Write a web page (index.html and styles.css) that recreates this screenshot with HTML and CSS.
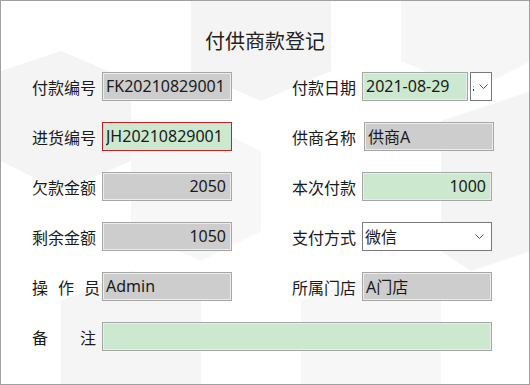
FILE: index.html
```html
<!DOCTYPE html>
<html lang="zh-CN">
<head>
  <meta charset="UTF-8" />
  <meta name="viewport" content="width=device-width, initial-scale=1.0" />
  <title>付供商款登记</title>
  <link rel="stylesheet" href="styles.css">
</head>
<body>
  <div class="panel">
    <!-- 背景装饰 -->
    <svg class="bg" width="530" height="385" viewBox="0 0 530 385">
      <polygon points="190,0 330,0 330,70 260,100 190,70" fill="#f4f4f4" />
      <polygon points="400,0 530,0 530,60 470,90 400,60" fill="#f6f6f6" />
      <polygon points="0,70 60,50 130,80 130,160 60,190 0,160" fill="#f4f4f4" />
      <polygon points="130,150 200,120 260,150 260,230 200,260 130,230" fill="#f7f7f7" />
      <polygon points="60,300 130,270 200,300 200,385 60,385" fill="#f5f5f5" />
      <polygon points="440,120 530,90 530,250 470,270 440,250" fill="#f4f4f4" />
      <polygon points="300,300 380,270 440,300 440,385 300,385" fill="#f7f7f7" />
    </svg>

    <h1 class="title">付供商款登记</h1>

    <div class="form">
      <label class="lbl">付款编号</label>
      <div class="cell"><input class="box ro" type="text" value="FK20210829001" readonly></div>
      <label class="lbl">付款日期</label>
      <div class="date">
        <input class="box green" type="text" value="2021-08-29">
        <button class="date-btn" type="button">
          <span class="dots"></span>
          <svg width="9" height="5" viewBox="0 0 9 5"><path d="M0.5 0.5 L4.5 4.5 L8.5 0.5" fill="none" stroke="#555" stroke-width="1"/></svg>
        </button>
      </div>

      <label class="lbl">进货编号</label>
      <div class="cell"><input class="box green err" type="text" value="JH20210829001"></div>
      <label class="lbl">供商名称</label>
      <div class="cell"><input class="box ro shift" type="text" value="供商A" readonly></div>

      <label class="lbl">欠款金额</label>
      <div class="cell"><input class="box ro num" type="text" value="2050" readonly></div>
      <label class="lbl">本次付款</label>
      <div class="cell"><input class="box green num" type="text" value="1000"></div>

      <label class="lbl">剩余金额</label>
      <div class="cell"><input class="box ro num" type="text" value="1050" readonly></div>
      <label class="lbl">支付方式</label>
      <div class="select">
        <span>微信</span>
        <svg width="9" height="5" viewBox="0 0 9 5"><path d="M0.5 0.5 L4.5 4.5 L8.5 0.5" fill="none" stroke="#555" stroke-width="1"/></svg>
      </div>

      <label class="lbl wide">操作员</label>
      <div class="cell"><input class="box ro" type="text" value="Admin" readonly></div>
      <label class="lbl">所属门店</label>
      <div class="cell"><input class="box ro" type="text" value="A门店" readonly></div>

      <label class="lbl">备注</label>
      <div class="cell span"><input class="box green" type="text" value=""></div>
    </div>
  </div>
</body>
</html>
```

FILE: styles.css
```css
body {
  margin: 0;
  font-family: "Noto Sans", "Noto Sans CJK SC", sans-serif;
  color: #1a1a1a;
}
.panel {
  position: relative;
  width: 530px;
  height: 385px;
  box-sizing: border-box;
  border: 1px solid #a0a0a0;
  background: #fff;
  overflow: hidden;
  padding-top: 26px;
}
.bg {
  position: absolute;
  left: 0;
  top: 0;
}
.title {
  position: relative;
  margin: 0 0 17px 0;
  font-family: "Noto Sans CJK SC", sans-serif;
  font-size: 20px;
  font-weight: normal;
  line-height: 28px;
  text-align: center;
  color: #222;
  padding-right: 0;
}
.form {
  position: relative;
  display: grid;
  grid-template-columns: 70px 190px 70px 130px;
  grid-auto-rows: 29px;
  row-gap: 21px;
  padding-left: 31px;
}
.lbl {
  display: block;
  width: 64px;
  font-family: "Noto Sans CJK SC", sans-serif;
  font-size: 16px;
  line-height: 29px;
  padding-top: 1px;
  text-align: justify;
  text-align-last: justify;
  white-space: nowrap;
}
.lbl.wide {
  width: 68px;
}
.cell {
  display: flex;
}
.span {
  grid-column: 2 / 5;
}
.box {
  width: 130px;
  height: 29px;
  box-sizing: border-box;
  margin: 0;
  padding: 0 3px 2px 3px;
  border: 1px solid #a6a6a6;
  box-shadow: inset 0 0 0 1px #ececec;
  font-family: "Noto Sans", "Noto Sans CJK SC", sans-serif;
  font-size: 16px;
  color: #1a1a1a;
  outline: none;
}
.span .box {
  width: 390px;
}
.ro {
  background: #cdcdcd;
}
.green {
  background: #cce8cf;
}
.err {
  border-color: #c8202a;
  box-shadow: none;
}
.num {
  text-align: right;
  padding-right: 5px;
}
.shift {
  margin-left: 2px;
}
.date {
  display: flex;
  gap: 2px;
}
.date .box {
  width: 106px;
}
.date-btn {
  position: relative;
  width: 22px;
  height: 29px;
  box-sizing: border-box;
  margin: 0;
  padding: 0 0 0 4px;
  border: 1px solid #7a7a7a;
  background: #fff;
  display: flex;
  align-items: center;
  justify-content: center;
}
.dots {
  position: absolute;
  left: 2px;
  top: 13px;
  width: 1px;
  height: 5px;
  border-top: 1px solid #999;
  border-bottom: 2px solid #333;
  box-sizing: border-box;
}
.select {
  width: 130px;
  height: 29px;
  box-sizing: border-box;
  border: 1px solid #7a7a7a;
  background: #fff;
  display: flex;
  align-items: center;
  justify-content: space-between;
  padding: 0 7px 2px 2px;
  font-family: "Noto Sans CJK SC", sans-serif;
  font-size: 16px;
}
.select svg {
  margin-top: 2px;
}
```
